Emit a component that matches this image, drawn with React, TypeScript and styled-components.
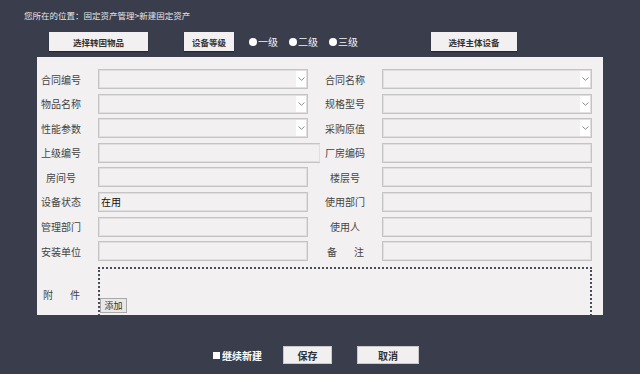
import styled, { createGlobalStyle } from 'styled-components'

const GlobalStyle = createGlobalStyle`
  html, body {
    margin: 0;
    background: #393d4c;
    font-family: "Noto Sans CJK SC", "Noto Sans", sans-serif;
  }
`

type Field = {
  label: string
  kind: 'select' | 'input'
  value?: string
  spread?: boolean
  wide?: boolean
}

const rows: [Field, Field][] = [
  [{ label: '合同编号', kind: 'select' }, { label: '合同名称', kind: 'select' }],
  [{ label: '物品名称', kind: 'select' }, { label: '规格型号', kind: 'select' }],
  [{ label: '性能参数', kind: 'select' }, { label: '采购原值', kind: 'select' }],
  [{ label: '上级编号', kind: 'input', wide: true }, { label: '厂房编码', kind: 'input' }],
  [{ label: '房间号', kind: 'input' }, { label: '楼层号', kind: 'input' }],
  [{ label: '设备状态', kind: 'input', value: '在用' }, { label: '使用部门', kind: 'input' }],
  [{ label: '管理部门', kind: 'input' }, { label: '使用人', kind: 'input' }],
  [{ label: '安装单位', kind: 'input' }, { label: '备注', kind: 'input', spread: true }]
]

const Chevron = () => (
  <svg width="7" height="4" viewBox="0 0 7 4">
    <path d="M0.5 0.5 L3.5 3.3 L6.5 0.5" fill="none" stroke="#8a8a8a" strokeWidth="1" />
  </svg>
)

const FieldCell = ({ field }: { field: Field }) => (
  <>
    <Label $spread={field.spread}>
      {field.spread ? field.label.split('').map((c) => <span key={c}>{c}</span>) : field.label}
    </Label>
    {field.kind === 'select' ? (
      <SelectBox>
        <SelectArrow>
          <Chevron />
        </SelectArrow>
      </SelectBox>
    ) : (
      <TextBox $wide={field.wide} defaultValue={field.value ?? ''} />
    )}
  </>
)

const App = () => {
  return (
    <Page>
      <GlobalStyle />
      <Breadcrumb>您所在的位置：固定资产管理&gt;新建固定资产</Breadcrumb>
      <Toolbar>
        <TopButton $width={99}>选择转固物品</TopButton>
        <TopButton $width={50} style={{ marginLeft: 36 }}>
          设备等级
        </TopButton>
        <RadioGroup>
          <Radio>
            <Dot />
            一级
          </Radio>
          <Radio>
            <Dot />
            二级
          </Radio>
          <Radio>
            <Dot />
            三级
          </Radio>
        </RadioGroup>
        <TopButton $width={86} style={{ marginLeft: 73 }}>
          选择主体设备
        </TopButton>
      </Toolbar>
      <Panel>
        <FormGrid>
          {rows.map(([left, right]) => (
            <FieldRow key={left.label}>
              <FieldCell field={left} />
              <FieldCell field={right} />
            </FieldRow>
          ))}
        </FormGrid>
        <AttachRow>
          <Label $spread>
            <span>附</span>
            <span>件</span>
          </Label>
          <AttachBox>
            <AddButton>添加</AddButton>
          </AttachBox>
        </AttachRow>
      </Panel>
      <Footer>
        <Check>
          <CheckBox />
          继续新建
        </Check>
        <FootButton $width={49} style={{ marginLeft: 21 }}>
          保存
        </FootButton>
        <FootButton $width={62} style={{ marginLeft: 25 }}>
          取消
        </FootButton>
      </Footer>
    </Page>
  )
}

export default App

const Page = styled.div`
  width: 640px;
  height: 374px;
  overflow: hidden;
  background: #393d4c;
`

const Breadcrumb = styled.div`
  padding: 10px 0 0 24px;
  font-size: 8.5px;
  line-height: 10px;
  color: #e6e6e6;
`

const Toolbar = styled.div`
  display: flex;
  align-items: center;
  height: 19px;
  margin-top: 12px;
  padding-left: 49px;
`

const TopButton = styled.button<{ $width: number }>`
  width: ${(p) => p.$width}px;
  height: 19px;
  padding: 0;
  border: none;
  background: #f2f0f0;
  box-shadow: 0 1px 1px rgba(0, 0, 0, 0.35);
  font-family: inherit;
  font-size: 8.5px;
  font-weight: bold;
  color: #333;
`

const RadioGroup = styled.div`
  display: flex;
  align-items: center;
  gap: 11px;
  margin-left: 15px;
`

const Radio = styled.label`
  display: flex;
  align-items: center;
  gap: 1px;
  font-size: 10px;
  color: #f2f2f2;
`

const Dot = styled.span`
  width: 8px;
  height: 8px;
  border-radius: 50%;
  background: #fff;
`

const Panel = styled.div`
  box-sizing: border-box;
  width: 566px;
  height: 258px;
  margin: 6px 0 0 37px;
  padding: 12px 0 0 4px;
  background: #f2f0f0;
  overflow: hidden;
`

const FormGrid = styled.div`
  display: flex;
  flex-direction: column;
  gap: 4.6px;
`

const FieldRow = styled.div`
  display: grid;
  grid-template-columns: 40px 210px 40px 210px;
  column-gap: 17px;
  height: 20px;
  align-items: center;
`

const Label = styled.div<{ $spread?: boolean }>`
  display: flex;
  justify-content: ${(p) => (p.$spread ? 'space-between' : 'center')};
  padding: ${(p) => (p.$spread ? '0 1px 0 2px' : '0')};
  font-size: 10px;
  color: #444;
  white-space: nowrap;
`

const SelectBox = styled.div`
  box-sizing: border-box;
  height: 20px;
  display: flex;
  justify-content: flex-end;
  border: 1px solid #c4c4c4;
  box-shadow: inset 0 0 0 1px #e0dede;
  background: #f2f0f0;
`

const SelectArrow = styled.div`
  width: 10px;
  margin: 1px;
  display: flex;
  align-items: center;
  justify-content: center;
  background: #fff;
`

const TextBox = styled.input<{ $wide?: boolean }>`
  box-sizing: border-box;
  width: ${(p) => (p.$wide ? '222px' : '100%')};
  height: 20px;
  margin: 0;
  padding: 0 2px;
  border: 1px solid #c4c4c4;
  border-right: ${(p) => (p.$wide ? 'none' : '1px solid #c4c4c4')};
  box-shadow: inset 0 0 0 1px #e0dede;
  background: #f2f0f0;
  font-family: inherit;
  font-size: 10px;
  color: #111;
  outline: none;
`

const AttachRow = styled.div`
  display: flex;
  align-items: center;
  margin-top: 5.4px;
  & > ${Label} {
    width: 40px;
    box-sizing: border-box;
  }
`

const AttachBox = styled.div`
  box-sizing: border-box;
  width: 494px;
  height: 56px;
  margin-left: 17px;
  padding-top: 29px;
  border: 2px dotted #4a4d58;
  border-bottom: none;
`

const AddButton = styled.button`
  display: block;
  width: 27px;
  height: 15px;
  padding: 0;
  border: 1px solid #a9a9a9;
  background: #e9e7e7;
  font-family: inherit;
  font-size: 9px;
  color: #333;
`

const Footer = styled.div`
  display: flex;
  align-items: center;
  height: 18px;
  margin-top: 31px;
  padding-left: 213px;
`

const Check = styled.label`
  display: flex;
  align-items: center;
  gap: 2px;
  font-size: 10px;
  font-weight: bold;
  color: #fff;
`

const CheckBox = styled.span`
  width: 7px;
  height: 7px;
  background: #fff;
`

const FootButton = styled.button<{ $width: number }>`
  width: ${(p) => p.$width}px;
  height: 18px;
  padding: 0;
  border: 1px solid #c9c9c9;
  background: #f1efef;
  font-family: inherit;
  font-size: 10px;
  font-weight: bold;
  color: #333;
`
